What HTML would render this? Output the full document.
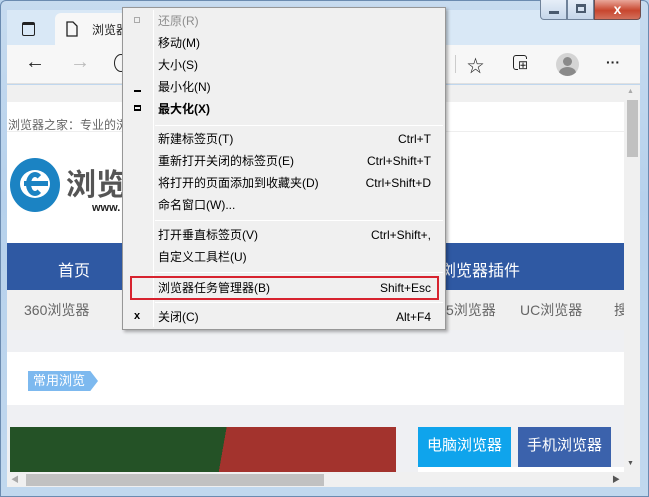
<!DOCTYPE html>
<html><head><meta charset="utf-8"><style>
*{margin:0;padding:0;box-sizing:border-box}
body{width:649px;height:497px;overflow:hidden;position:relative;background:#b9d3ec;font-family:"Liberation Sans","Noto Sans CJK SC",sans-serif;font-size:12px}
.a{position:absolute}
.mi{position:absolute;left:35px;right:14px;height:22px;line-height:22px;font-size:12px;color:#000}
.mi span{position:absolute;right:0;top:0}
.sep{position:absolute;left:32px;right:2px;height:1px;background:#d7d7d7;border-bottom:1px solid #fff}
</style></head><body>
<div class="a" style="left:0;top:0;width:649px;height:497px;background:linear-gradient(180deg,#c7dbef,#b6d1ec 40%,#c1d8ee);border:1px solid #6b8bb0;border-radius:6px 6px 0 0"></div>
<div class="a" style="left:7px;top:10px;width:633px;height:35px;background:#d9e8f6"></div>
<div class="a" style="left:22px;top:22px;width:13px;height:14px;border:1.5px solid #222;border-radius:2px;border-top-width:3px"></div>
<div class="a" style="left:55px;top:13px;width:80px;height:32px;background:#f7f7f7;border-radius:6px 6px 0 0"></div>
<svg class="a" style="left:66px;top:21px" width="12" height="16"><path d="M1 1h6l4 4v10H1z" fill="none" stroke="#222" stroke-width="1.3"/></svg>
<div class="a" style="left:92px;top:21px;font-size:12px;color:#222">浏览器</div>
<div class="a" style="left:540px;top:0;width:27px;height:20px;background:linear-gradient(#e6eef8,#c5d6ea);border:1px solid #6f829a;border-top:none;border-radius:0 0 0 4px"><div class="a" style="left:8px;top:11px;width:10px;height:3px;background:#4a5a6e"></div></div>
<div class="a" style="left:567px;top:0;width:27px;height:20px;background:linear-gradient(#e6eef8,#c5d6ea);border:1px solid #6f829a;border-top:none"><div class="a" style="left:8px;top:4px;width:10px;height:9px;border:2px solid #4a5a6e;border-top-width:3px"></div></div>
<div class="a" style="left:594px;top:0;width:47px;height:20px;background:linear-gradient(#e9a79a,#c8462e 55%,#d2705c);border:1px solid #6f4d4d;border-top:none;border-radius:0 0 4px 0;color:#fff;font-weight:bold;text-align:center;line-height:18px;font-size:14px">x</div>
<div class="a" style="left:7px;top:45px;width:633px;height:39px;background:#f7f7f7;border-bottom:1px solid #e0e0e0"></div>
<div class="a" style="left:25px;top:51px;font-size:20px;color:#222">←</div>
<div class="a" style="left:70px;top:51px;font-size:20px;color:#bbb">→</div>
<div class="a" style="left:114px;top:54px;width:14px;height:18px;border:1.5px solid #222;border-radius:50%"></div>
<div class="a" style="left:455px;top:55px;width:1px;height:18px;background:#ccc"></div>
<div class="a" style="left:467px;top:52px;font-size:17px;color:#222">☆</div>
<div class="a" style="left:513px;top:55px;width:14px;height:15px;border:1.3px solid #222;border-radius:3px"></div>
<div class="a" style="left:518px;top:59px;font-size:12px;line-height:12px;color:#222;background:#f7f7f7">⊞</div>
<div class="a" style="left:556px;top:53px;width:23px;height:23px;border-radius:50%;background:#d4d4d4;overflow:hidden"><div class="a" style="left:7px;top:4px;width:9px;height:9px;border-radius:50%;background:#8a8a8a"></div><div class="a" style="left:3px;top:14px;width:17px;height:12px;border-radius:50%;background:#8a8a8a"></div></div>
<div class="a" style="left:606px;top:54px;font-size:14px;font-weight:bold;color:#222">···</div>
<div class="a" style="left:7px;top:85px;width:617px;height:387px;background:#fff"></div>
<div class="a" style="left:7px;top:85px;width:617px;height:17px;background:#f0f0f0"></div>
<div class="a" style="left:8px;top:116px;color:#666;font-size:12px">浏览器之家：专业的浏</div>
<div class="a" style="left:7px;top:131px;width:617px;height:1px;background:#eee"></div>
<div class="a" style="left:10px;top:158px;width:50px;height:54px;border-radius:50%;background:#1b83c3"></div>
<div class="a" style="left:20px;top:170px;width:30px;height:28px;border-radius:50%;background:#fff"></div>
<div class="a" style="left:26px;top:172px;width:18px;height:24px;border-radius:50%;border:5px solid #1b83c3;border-right-color:transparent"></div>
<div class="a" style="left:24px;top:181px;width:24px;height:5px;background:#1b83c3"></div>
<div class="a" style="left:66px;top:160px;font-size:30px;font-weight:bold;color:#555">浏览</div>
<div class="a" style="left:92px;top:202px;font-size:11px;font-weight:bold;color:#222">www.</div>
<div class="a" style="left:7px;top:243px;width:617px;height:47px;background:#2f59a3"></div>
<div class="a" style="left:58px;top:257px;font-size:16px;color:#fff">首页</div>
<div class="a" style="left:440px;top:257px;font-size:16px;color:#fff">浏览器插件</div>
<div class="a" style="left:7px;top:290px;width:617px;height:40px;background:#f0f0f0"></div>
<div class="a" style="left:24px;top:300px;font-size:14px;color:#666">360浏览器</div>
<div class="a" style="left:446px;top:300px;font-size:14px;color:#666">5浏览器</div>
<div class="a" style="left:520px;top:300px;font-size:14px;color:#666">UC浏览器</div>
<div class="a" style="left:614px;top:300px;font-size:14px;color:#666">搜</div>
<div class="a" style="left:7px;top:330px;width:617px;height:22px;background:#eff0f3"></div>
<div class="a" style="left:7px;top:405px;width:617px;height:67px;background:#eff0f3"></div>
<div class="a" style="left:28px;top:371px;width:70px;height:20px;background:#7db9ef;color:#fff;font-size:13px;line-height:20px;padding-left:5px;clip-path:polygon(0 0,89% 0,100% 50%,89% 100%,0 100%)">常用浏览</div>
<div class="a" style="left:10px;top:427px;width:386px;height:45px;background:linear-gradient(100deg,#245226 0 55%,#a3332d 55%)"></div>
<div class="a" style="left:418px;top:427px;width:93px;height:40px;background:#0fa4ec;color:#fff;font-size:15px;text-align:center;line-height:38px">电脑浏览器</div>
<div class="a" style="left:518px;top:427px;width:93px;height:40px;background:#3b62ac;color:#fff;font-size:15px;text-align:center;line-height:38px">手机浏览器</div>
<div class="a" style="left:418px;top:467px;width:206px;height:5px;background:#fff"></div>
<div class="a" style="left:624px;top:85px;width:16px;height:387px;background:#f0f0f0"></div>
<div class="a" style="left:627px;top:100px;width:11px;height:57px;background:#c1c1c1"></div>
<div class="a" style="left:627px;top:88px;font-size:7px;color:#aaa">▲</div>
<div class="a" style="left:627px;top:460px;font-size:7px;color:#555">▼</div>
<div class="a" style="left:7px;top:472px;width:633px;height:15px;background:#f0f0f0"></div>
<div class="a" style="left:26px;top:474px;width:298px;height:12px;background:#c1c1c1"></div>
<div class="a" style="left:11px;top:474px;font-size:8px;color:#aaa">◀</div>
<div class="a" style="left:612px;top:474px;font-size:8px;color:#555">▶</div>
<div class="a" style="left:122px;top:7px;width:324px;height:323px;background:#f0f0f0;border:1px solid #979797;box-shadow:2px 2px 3px rgba(0,0,0,.3)">
 <div class="a" style="left:30px;top:2px;width:1px;height:317px;background:#e2e2e2;border-right:1px solid #fff"></div>
 <div class="a" style="left:11px;top:9px;width:6px;height:6px;border:1px solid #aaa"></div>
 <div class="mi" style="top:2px;color:#8d8d8d">还原(R)</div>
 <div class="mi" style="top:24px">移动(M)</div>
 <div class="mi" style="top:46px">大小(S)</div>
 <div class="a" style="left:11px;top:82px;width:7px;height:2px;background:#000"></div>
 <div class="mi" style="top:68px">最小化(N)</div>
 <div class="a" style="left:11px;top:97px;width:7px;height:6px;border:2px solid #000;border-width:2px 1.5px"></div>
 <div class="mi" style="top:90px;font-weight:bold">最大化(X)</div>
 <div class="sep" style="top:117px"></div>
 <div class="mi" style="top:120px">新建标签页(T)<span>Ctrl+T</span></div>
 <div class="mi" style="top:142px">重新打开关闭的标签页(E)<span>Ctrl+Shift+T</span></div>
 <div class="mi" style="top:164px">将打开的页面添加到收藏夹(D)<span>Ctrl+Shift+D</span></div>
 <div class="mi" style="top:186px">命名窗口(W)...</div>
 <div class="sep" style="top:212px"></div>
 <div class="mi" style="top:216px">打开垂直标签页(V)<span>Ctrl+Shift+,</span></div>
 <div class="mi" style="top:238px">自定义工具栏(U)</div>
 <div class="sep" style="top:264px"></div>
 <div class="mi" style="top:269px">浏览器任务管理器(B)<span>Shift+Esc</span></div>
 <div class="sep" style="top:294px"></div>
 <div class="a" style="left:11px;top:302px;font-size:11px;font-weight:bold">x</div>
 <div class="mi" style="top:298px">关闭(C)<span>Alt+F4</span></div>
</div>
<div class="a" style="left:130px;top:276px;width:309px;height:24px;border:2px solid #d7232f"></div>
</body></html>
